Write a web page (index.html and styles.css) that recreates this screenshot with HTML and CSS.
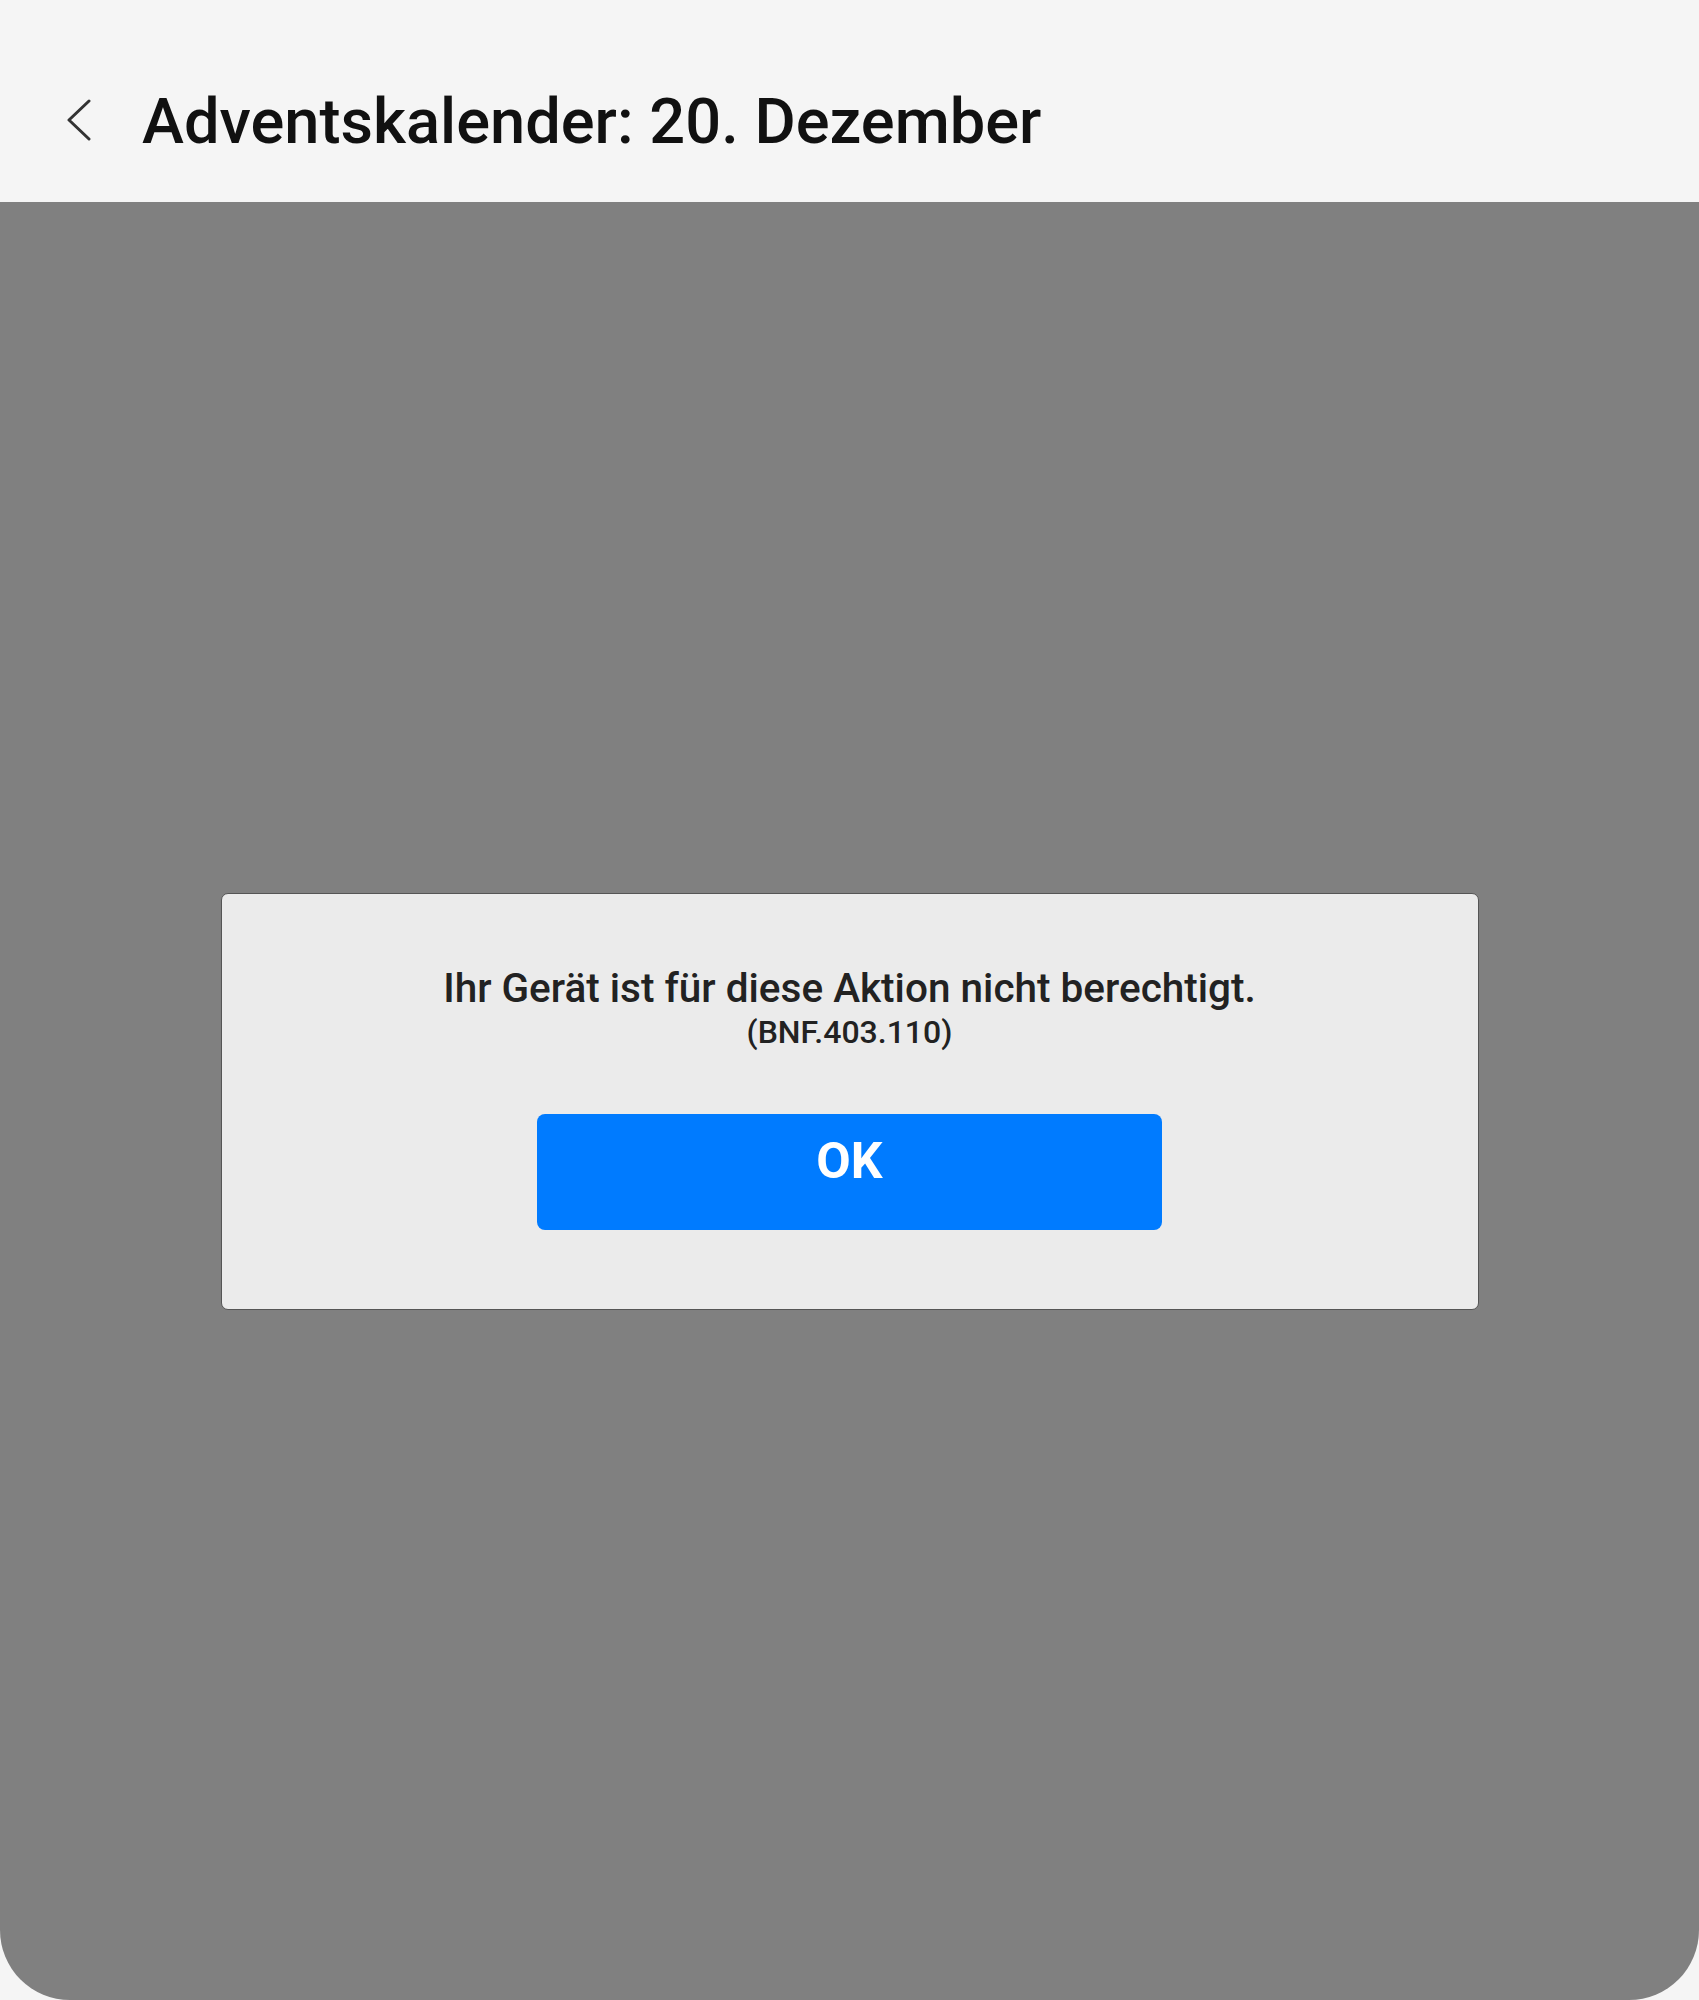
FILE: index.html
```html
<!DOCTYPE html>
<html lang="de">
<head>
<meta charset="utf-8">
<title>Adventskalender: 20. Dezember</title>
<link rel="stylesheet" href="styles.css">
</head>
<body>
<div class="app">
  <header class="topbar">
    <button class="back" aria-label="Zurück">
      <svg width="26" height="42" viewBox="0 0 26 42" aria-hidden="true">
        <path d="M23 2 L3 21 L23 40" fill="none" stroke="#333" stroke-width="3" stroke-linecap="round" stroke-linejoin="round"/>
      </svg>
    </button>
    <h1 class="title">Adventskalender: 20. Dezember</h1>
  </header>
  <main class="content">
    <div class="dialog">
      <p class="message">Ihr Gerät ist für diese Aktion nicht berechtigt.</p>
      <p class="code">(BNF.403.110)</p>
      <button class="ok">OK</button>
    </div>
  </main>
</div>
</body>
</html>
```
FILE: styles.css
```css
html, body {
  margin: 0;
  padding: 0;
  background: #f5f5f5;
}
body {
  font-family: Roboto, "Noto Sans", "Liberation Sans", sans-serif;
}
.app {
  width: 1699px;
  height: 2000px;
  display: flex;
  flex-direction: column;
}
.topbar {
  height: 202px;
  box-sizing: border-box;
  padding: 42px 0 0 66px;
  display: flex;
  align-items: center;
  background: #f5f5f5;
}
.back {
  border: 0;
  background: none;
  padding: 0;
  margin: -4px 50px 0 0;
  width: 26px;
  height: 42px;
  display: flex;
}
.title {
  margin: 0;
  font-size: 63.2px;
  font-weight: 500;
  color: #111;
  line-height: 1;
}
.content {
  flex: 1;
  background: #808080;
  border-radius: 0 0 70px 70px;
  display: flex;
  align-items: center;
  justify-content: center;
}
.dialog {
  width: 1258px;
  height: 417px;
  box-sizing: border-box;
  background: #ebebeb;
  border: 1.5px solid #555;
  border-radius: 7px;
  display: flex;
  flex-direction: column;
  align-items: center;
  padding-top: 70px;
}
.message {
  margin: 0;
  font-size: 40.5px;
  font-weight: 500;
  color: #222;
  line-height: 48px;
}
.code {
  margin: 2px 0 0;
  font-size: 32px;
  font-weight: 500;
  color: #222;
  line-height: 36px;
}
.ok {
  margin-top: 64px;
  width: 625px;
  height: 116px;
  border: 0;
  border-radius: 8px;
  background: #007bff;
  color: #fff;
  font-family: Roboto, "Noto Sans", "Liberation Sans", sans-serif;
  font-size: 50px;
  font-weight: 700;
  padding: 0 0 22px 0;
}
```
